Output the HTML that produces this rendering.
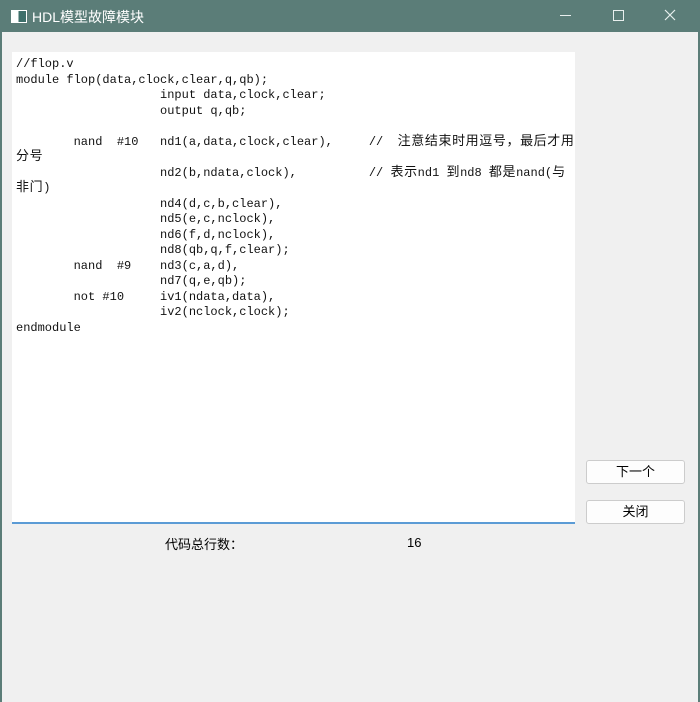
<!DOCTYPE html>
<html><head><meta charset="utf-8"><style>
body{margin:0;width:700px;height:702px;background:#f0f0f0;position:relative;overflow:hidden;font-family:"Liberation Sans","Noto Sans CJK SC",sans-serif}
.tb{position:absolute;left:0;top:0;width:700px;height:32px;background:#5b7d78;color:#fff;font-size:14px}
.bl{position:absolute;left:0;top:32px;width:2px;height:670px;background:#5b7d78}
.br{position:absolute;right:0;top:32px;width:2px;height:670px;background:#5b7d78}
.ta{position:absolute;left:12px;top:52px;width:563px;height:470px;background:#fff;border-bottom:2px solid #5b9bd5}
pre{margin:0;position:absolute;left:16px;top:57px;font-family:"Liberation Mono","Noto Serif CJK SC",monospace;font-size:12px;line-height:15.5px;color:#111}
pre span{font-family:"Noto Sans CJK SC",sans-serif;font-size:13px;letter-spacing:0.6px;line-height:0}
.btn{position:absolute;left:586px;width:97px;height:22px;border:1px solid #ccc;border-radius:3px;background:#fdfdfd;font-size:13px;text-align:center;line-height:22px;color:#000}
</style></head><body>
<div class="tb">
<div style="position:absolute;left:11px;top:10px;width:14px;height:11px;border:1px solid #fff;background:linear-gradient(90deg,#fff 0 45%,#3d6f6a 45%)"></div>
<div style="position:absolute;left:32px;top:7px">HDL模型故障模块</div>
<div style="position:absolute;left:560px;top:15px;width:11px;height:1px;background:#e8efee"></div>
<div style="position:absolute;left:613px;top:10px;width:9px;height:9px;border:1px solid #e8efee"></div>
<svg style="position:absolute;left:664px;top:9px" width="12" height="12"><path d="M1 1L11 11M11 1L1 11" stroke="#e8efee" stroke-width="1.2"/></svg>
</div>
<div class="bl"></div><div class="br"></div>
<div class="ta"></div>
<pre>//flop.v
module flop(data,clock,clear,q,qb);
                    input data,clock,clear;
                    output q,qb;

        nand  #10   nd1(a,data,clock,clear),     //  <span>注意结束时用逗号，最后才用</span>
<span>分号</span>
                    nd2(b,ndata,clock),          // <span>表示</span>nd1 <span>到</span>nd8 <span>都是</span>nand(<span>与</span>
<span>非门</span>)
                    nd4(d,c,b,clear),
                    nd5(e,c,nclock),
                    nd6(f,d,nclock),
                    nd8(qb,q,f,clear);
        nand  #9    nd3(c,a,d),
                    nd7(q,e,qb);
        not #10     iv1(ndata,data),
                    iv2(nclock,clock);
endmodule</pre>
<div class="btn" style="top:460px">下一个</div>
<div class="btn" style="top:500px">关闭</div>
<div style="position:absolute;left:165px;top:534px;font-size:13px">代码总行数：</div>
<div style="position:absolute;left:407px;top:535px;font-size:13px">16</div>
</body></html>
